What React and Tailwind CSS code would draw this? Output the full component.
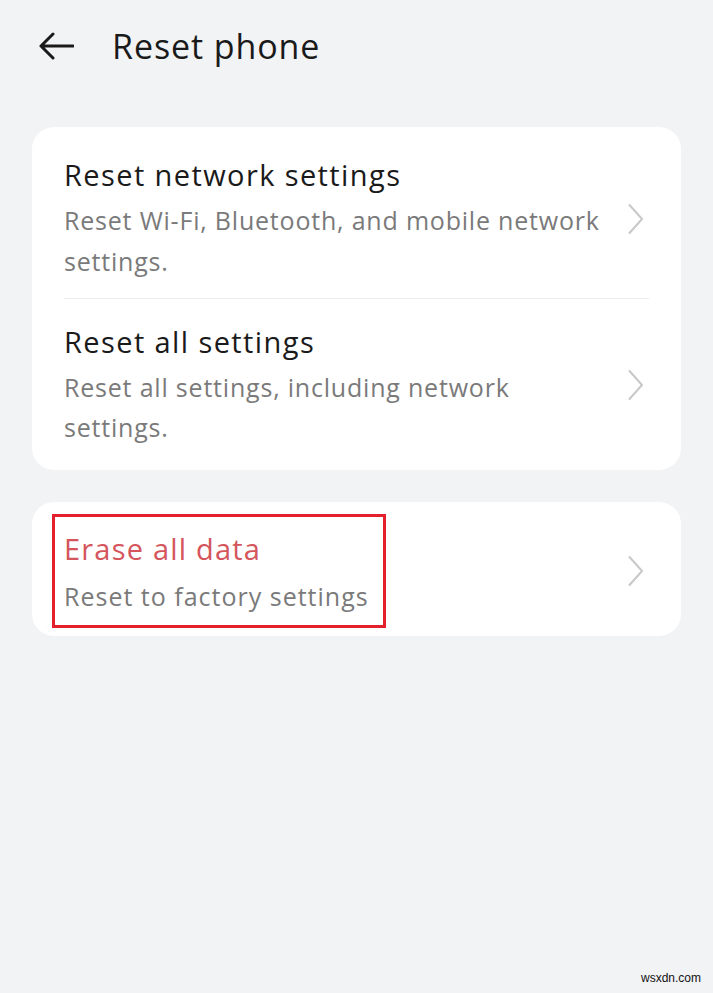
import React from "react";

function Chevron() {
  return (
    <svg width="18" height="32" viewBox="0 0 18 32" fill="none" className="shrink-0">
      <path d="M2.5 2 L15 16 L2.5 30" stroke="#c8c8c8" strokeWidth="2" strokeLinecap="round" strokeLinejoin="round" />
    </svg>
  );
}

export default function App() {
  return (
    <div className="w-[713px] h-[993px] bg-[#f2f3f5] relative overflow-hidden" style={{ fontFamily: "'Open Sans', 'Noto Sans', sans-serif" }}>
      <div className="flex items-center h-[92px] pl-[38px]">
        <svg width="36" height="28" viewBox="0 0 36 28" fill="none">
          <path d="M35 14 H3 M15 2 L3 14 L15 26" stroke="#1a1a1a" strokeWidth="3" strokeLinecap="round" strokeLinejoin="round" />
        </svg>
        <span className="ml-[38px] text-[34px] tracking-[0.9px] text-[#1a1a1a] leading-none">Reset phone</span>
      </div>

      <div className="mx-[32px] mt-[35px] bg-white rounded-[22px] pl-[32px] pr-[36px]">
        <div className="flex items-center pt-[28px] pb-[16px]">
          <div className="flex-1">
            <div className="text-[29px] leading-[40px] tracking-[1.4px] text-[#1a1a1a]">Reset network settings</div>
            <div className="mt-[5px] text-[25px] leading-[41px] tracking-[0.8px] text-[#7a7a7a]">Reset Wi-Fi, Bluetooth, and mobile network<br />settings.</div>
          </div>
          <Chevron />
        </div>
        <div className="h-px bg-[#ececec] mr-[-4px]" />
        <div className="flex items-center pt-[23px] pb-[23px]">
          <div className="flex-1">
            <div className="text-[29px] leading-[40px] tracking-[1.4px] text-[#1a1a1a]">Reset all settings</div>
            <div className="mt-[5px] text-[25px] leading-[40px] tracking-[0.8px] text-[#7a7a7a]">Reset all settings, including network<br />settings.</div>
          </div>
          <Chevron />
        </div>
      </div>

      <div className="mx-[32px] mt-[32px] bg-white rounded-[22px] pl-[20px] pr-[36px] pt-[12px] pb-[8px] flex items-center">
        <div className="flex-1">
          <div className="inline-block border-[3px] border-[#e3202b] pl-[9px] pr-[14px] pt-[10px] pb-[4px]">
            <div className="text-[29px] leading-[44px] tracking-[1.2px] text-[#d4555c]">Erase all data</div>
            <div className="text-[25px] leading-[50px] tracking-[1px] text-[#7a7a7a]">Reset to factory settings</div>
          </div>
        </div>
        <Chevron />
      </div>

      <div className="absolute right-[12px] bottom-[6px] text-[12px] text-[#111]" style={{ fontFamily: "'Liberation Sans', sans-serif" }}>wsxdn.com</div>
    </div>
  );
}
